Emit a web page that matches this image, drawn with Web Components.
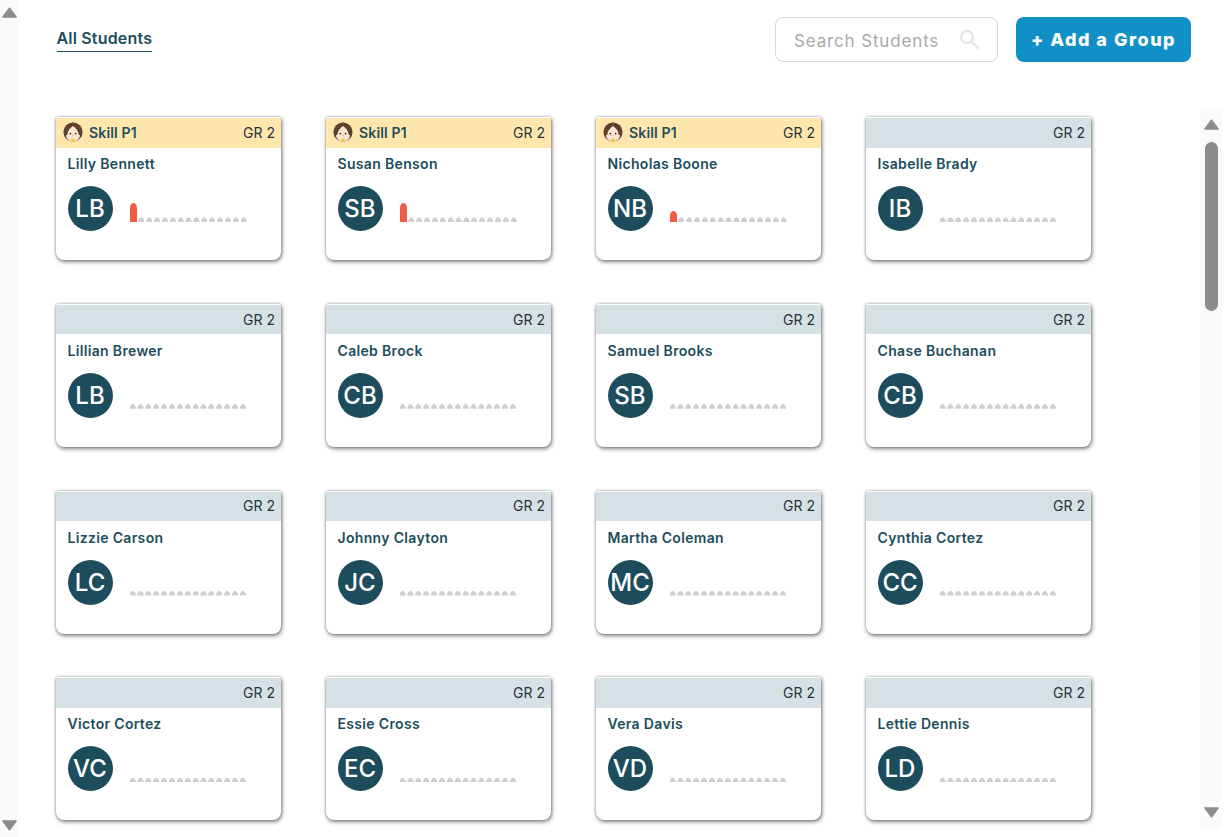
<!DOCTYPE html>
<html>
<head>
<meta charset="utf-8">
<title>All Students</title>
<style>
    html,body{margin:0;padding:0;background:#fff;overflow:hidden;}
    body{font-family:"Inter","Liberation Sans",sans-serif;color:#1d4d5c;}
</style>
</head>
<body>
<student-page>
    <student-card slot="cards" name="Lilly Bennett" initials="LB" skill="Skill P1" level="19"></student-card>
    <student-card slot="cards" name="Susan Benson" initials="SB" skill="Skill P1" level="19"></student-card>
    <student-card slot="cards" name="Nicholas Boone" initials="NB" skill="Skill P1" level="11"></student-card>
    <student-card slot="cards" name="Isabelle Brady" initials="IB"></student-card>
    <student-card slot="cards" name="Lillian Brewer" initials="LB"></student-card>
    <student-card slot="cards" name="Caleb Brock" initials="CB"></student-card>
    <student-card slot="cards" name="Samuel Brooks" initials="SB"></student-card>
    <student-card slot="cards" name="Chase Buchanan" initials="CB"></student-card>
    <student-card slot="cards" name="Lizzie Carson" initials="LC"></student-card>
    <student-card slot="cards" name="Johnny Clayton" initials="JC"></student-card>
    <student-card slot="cards" name="Martha Coleman" initials="MC"></student-card>
    <student-card slot="cards" name="Cynthia Cortez" initials="CC"></student-card>
    <student-card slot="cards" name="Victor Cortez" initials="VC"></student-card>
    <student-card slot="cards" name="Essie Cross" initials="EC"></student-card>
    <student-card slot="cards" name="Vera Davis" initials="VD"></student-card>
    <student-card slot="cards" name="Lettie Dennis" initials="LD"></student-card>
</student-page>

<script>
const student_rail = document.createElement('template');
student_rail.innerHTML = `
    <style>
        :host{display:flex;flex-direction:column;align-items:center;background:#fafafa;box-sizing:border-box;}
        svg{display:block;flex:none;}
        .track{flex:1;display:flex;flex-direction:column;min-height:0;}
        .thumb{display:none;width:13px;height:169px;border-radius:7px;background:#8c8c8c;margin-top:12px;}
        :host([thumb]) .thumb{display:block;}
    </style>
    <svg width="15" height="11" viewBox="0 0 15 11"><path d="M7.5 1.2 L14 10 L1 10 Z" fill="#8c8c8c" stroke="#8c8c8c" stroke-width="1.6" stroke-linejoin="round"/></svg>
    <div class="track"><div class="thumb"></div></div>
    <svg width="15" height="11" viewBox="0 0 15 11"><path d="M1 1 L14 1 L7.5 9.8 Z" fill="#8c8c8c" stroke="#8c8c8c" stroke-width="1.6" stroke-linejoin="round"/></svg>
`;
class studentrail extends HTMLElement {
    constructor() {
        super();
        this.attachShadow({ mode: 'open' });
        this.shadowRoot.appendChild(student_rail.content.cloneNode(true));
    }
}
window.customElements.define('student-rail', studentrail);

const student_toolbar = document.createElement('template');
student_toolbar.innerHTML = `
    <style>
        :host{display:flex;align-items:flex-start;justify-content:space-between;height:45px;}
        .tab{margin:12px 0 0 .5px;font-size:16px;line-height:19px;font-weight:600;color:#1d4d5c;letter-spacing:.18px;border-bottom:1px solid #1d4d5c;padding-bottom:3px;}
        .acoes{display:flex;gap:18px;}
        .busca{width:223px;height:45px;box-sizing:border-box;border:1px solid #d5d7e0;border-radius:8px;display:flex;align-items:center;justify-content:space-between;padding:3px 18px 0 18px;font-size:17px;letter-spacing:.85px;color:#a9a9a9;background:#fff;}
        .busca svg{display:block;margin-top:-4px;}
        .btn{width:175px;height:45px;border:0;border-radius:8px;background:#1190c8;color:#fff;font:800 18px "Inter","Liberation Sans",sans-serif;letter-spacing:1.5px;padding:0;white-space:nowrap;}
    </style>
    <div class="tab">All Students</div>
    <div class="acoes">
        <div class="busca">
            <span>Search Students</span>
            <svg width="20" height="20" viewBox="0 0 20 20" fill="none" stroke="#e3e5ea" stroke-width="2.4">
                <circle cx="8" cy="8" r="6"/>
                <path d="M12.5 12.5 L19 19" stroke-linecap="round"/>
            </svg>
        </div>
        <button class="btn">+ Add a Group</button>
    </div>
`;
class studenttoolbar extends HTMLElement {
    constructor() {
        super();
        this.attachShadow({ mode: 'open' });
        this.shadowRoot.appendChild(student_toolbar.content.cloneNode(true));
    }
}
window.customElements.define('student-toolbar', studenttoolbar);

const student_card = document.createElement('template');
student_card.innerHTML = `
    <style>
        :host{display:block;width:225.5px;height:143px;box-sizing:border-box;background:#fff;border-radius:2px 2px 8px 8px;box-shadow:1px 2px 4px rgba(0,0,0,.45),0 0 3px rgba(0,0,0,.35);overflow:hidden;}
        .topo{height:29.6px;margin-top:1px;background:#d6e1e6;display:flex;align-items:center;padding:0 6px 1px 7px;box-sizing:border-box;font-size:14px;color:#26323a;}
        :host([skill]) .topo{background:#fee6ad;}
        .topo svg{display:none;margin-right:6.5px;}
        :host([skill]) .topo svg{display:block;}
        .skill{font-weight:600;color:#1d4d5c;font-size:14px;letter-spacing:.15px;}
        .gr{margin-left:auto;}
        .nome{margin:8.4px 0 0 12px;font-size:14px;line-height:16px;font-weight:600;color:#1d4d5c;letter-spacing:.33px;}
        .linha{display:flex;align-items:flex-end;margin:14px 0 0 12px;}
        .avatar{width:45px;height:45px;border-radius:50%;background:#1d4d5c;color:#fff;display:flex;align-items:center;justify-content:center;font-size:24px;font-weight:500;}
        .barras{display:flex;gap:1.7px;margin:0 0 9px 17px;align-items:flex-end;}
        .barras i{display:block;width:6.2px;height:5px;background:#cfcfcf;clip-path:polygon(0 100%,0 62%,28% 18%,50% 0,72% 18%,100% 62%,100% 100%);}
        .barras i.on{background:#ec5e46;width:7px;clip-path:none;border-radius:3.5px 3.5px 0 0 / 5px 5px 0 0;}
    </style>
    <div class="topo">
        <svg width="20" height="20" viewBox="0 0 20 20">
            <circle cx="10" cy="10" r="9.6" fill="#5e412c"/>
            <path d="M3 13 C3 17 6.5 19.6 10 19.6 C13.5 19.6 17 17 17 13 Z" fill="#f7e3cd"/>
            <path d="M10 4 C7 6.2 4.4 9 4.4 12.6 C4.6 16.2 7.2 18 10 18 C12.8 18 15.4 16.2 15.6 12.6 C15.6 9 13 6.2 10 4Z" fill="#fbe6d4"/>
            <circle cx="7.4" cy="11.6" r=".9" fill="#33241a"/>
            <circle cx="12.6" cy="11.6" r=".9" fill="#33241a"/>
            <path d="M9 13.4 h2 l-1 1.2z" fill="#c98a5a"/>
            <circle cx="10" cy="1.4" r="1.1" fill="#7c573c"/>
            <circle cx="10" cy="18.2" r="1.8" fill="#f6c722"/>
        </svg>
        <span class="skill"></span>
        <span class="gr">GR 2</span>
    </div>
    <div class="nome"></div>
    <div class="linha">
        <div class="avatar"></div>
        <div class="barras"></div>
    </div>
`;
class studentcard extends HTMLElement {
    constructor() {
        super();
        this.attachShadow({ mode: 'open' });
        this.shadowRoot.appendChild(student_card.content.cloneNode(true));
    }
    connectedCallback() {
        let root = this.shadowRoot;
        root.querySelector('.skill').textContent = this.getAttribute('skill') || '';
        root.querySelector('.nome').textContent = this.getAttribute('name');
        root.querySelector('.avatar').textContent = this.getAttribute('initials');
        let barras = root.querySelector('.barras');
        let level = this.getAttribute('level');
        for (let i = 0; i < 15; i++) {
            let b = document.createElement('i');
            if (i == 0 && level) {
                b.className = 'on';
                b.style.height = level + 'px';
            }
            barras.appendChild(b);
        }
    }
}
window.customElements.define('student-card', studentcard);

const student_page = document.createElement('template');
student_page.innerHTML = `
    <style>
        :host{display:flex;width:1232px;height:837px;overflow:hidden;}
        .esq{width:18px;height:837px;padding:7px 0 6px;flex:none;}
        .main{flex:1;padding:17px 41px 0 38px;min-width:0;box-sizing:border-box;}
        .corpo{display:flex;margin-right:-31px;margin-top:46px;}
        .grid{flex:1;display:grid;grid-template-columns:repeat(4,225.5px);column-gap:44.5px;row-gap:43.8px;padding-top:9px;align-content:start;margin-left:-.5px;}
        .dir{width:22px;height:721px;padding:11px 0 11px;flex:none;}
    </style>
    <student-rail class="esq"></student-rail>
    <div class="main">
        <student-toolbar></student-toolbar>
        <div class="corpo">
            <div class="grid"><slot name="cards"></slot></div>
            <student-rail class="dir" thumb></student-rail>
        </div>
    </div>
`;
class studentpage extends HTMLElement {
    constructor() {
        super();
        this.attachShadow({ mode: 'open' });
        this.shadowRoot.appendChild(student_page.content.cloneNode(true));
    }
}
window.customElements.define('student-page', studentpage);
</script>
</body>
</html>
